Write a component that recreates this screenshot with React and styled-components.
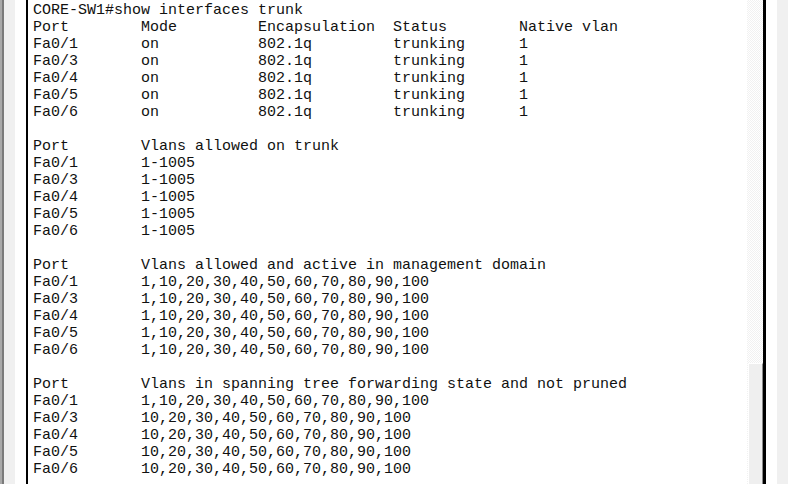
import React from "react";
import styled, { createGlobalStyle } from "styled-components";

const GlobalStyle = createGlobalStyle`
  html, body {
    margin: 0;
    padding: 0;
    background: #ffffff;
    overflow: hidden;
  }
`;

const Window = styled.div`
  width: 788px;
  height: 484px;
  display: flex;
  background: #ffffff;
`;

const EdgeStrip = styled.div`
  width: 15px;
  flex-shrink: 0;
  background: linear-gradient(
    to right,
    #a9a9a9 0,
    #a9a9a9 2px,
    #7b7b7b 2px,
    #7b7b7b 4px,
    #f0f0f0 4px
  );
`;

const Gutter = styled.div`
  width: ${(p) => p.$w || 11}px;
  flex-shrink: 0;
  background: ${(p) => p.$bg || "#ffffff"};
`;

const Rule = styled.div`
  width: ${(p) => p.$w || 2}px;
  flex-shrink: 0;
  background: #000000;
`;

const Console = styled.div`
  flex: 1;
  padding: 2px 0 0 5px;
  font-family: "Liberation Mono", "Courier New", monospace;
  font-size: 15px;
  line-height: 17px;
  color: #111111;
  white-space: pre;
  overflow: hidden;
`;

const Row = styled.div`
  height: 17px;
`;

const ScrollTrack = styled.div`
  width: 16px;
  flex-shrink: 0;
  display: flex;
  flex-direction: column;
  justify-content: flex-end;
  background-color: #ffffff;
  background-image: conic-gradient(
    #f1f1f1 25%,
    #ffffff 0 50%,
    #f1f1f1 0 75%,
    #ffffff 0
  );
  background-size: 2px 2px;
`;

const Thumb = styled.div`
  height: 121px;
  margin-left: 1px;
  background: #efefef;
  border-left: 1px solid #ffffff;
  border-top: 1px solid #ffffff;
  border-right: 1px solid #8a8a8a;
  box-sizing: border-box;
`;

const ports = ["Fa0/1", "Fa0/3", "Fa0/4", "Fa0/5", "Fa0/6"];
const pad = (s, n) => s.padEnd(n, " ");

const allVlans = "1,10,20,30,40,50,60,70,80,90,100";
const fwdVlans = "10,20,30,40,50,60,70,80,90,100";

const lines = [
  "CORE-SW1#show interfaces trunk",
  pad("Port", 12) + pad("Mode", 13) + pad("Encapsulation", 15) + pad("Status", 14) + "Native vlan",
  ...ports.map((p) => pad(p, 12) + pad("on", 13) + pad("802.1q", 15) + pad("trunking", 14) + "1"),
  "",
  pad("Port", 12) + "Vlans allowed on trunk",
  ...ports.map((p) => pad(p, 12) + "1-1005"),
  "",
  pad("Port", 12) + "Vlans allowed and active in management domain",
  ...ports.map((p) => pad(p, 12) + allVlans),
  "",
  pad("Port", 12) + "Vlans in spanning tree forwarding state and not pruned",
  ...ports.map((p, i) => pad(p, 12) + (i === 0 ? allVlans : fwdVlans)),
];

export default function App() {
  return (
    <>
      <GlobalStyle />
      <Window>
        <EdgeStrip />
        <Gutter />
        <Rule />
        <Console>
          {lines.map((l, i) => (
            <Row key={i}>{l}</Row>
          ))}
        </Console>
        <ScrollTrack>
          <Thumb />
        </ScrollTrack>
        <Rule $w={3} />
        <Gutter />
        <Gutter $bg="#f0f0f0" />
      </Window>
    </>
  );
}
